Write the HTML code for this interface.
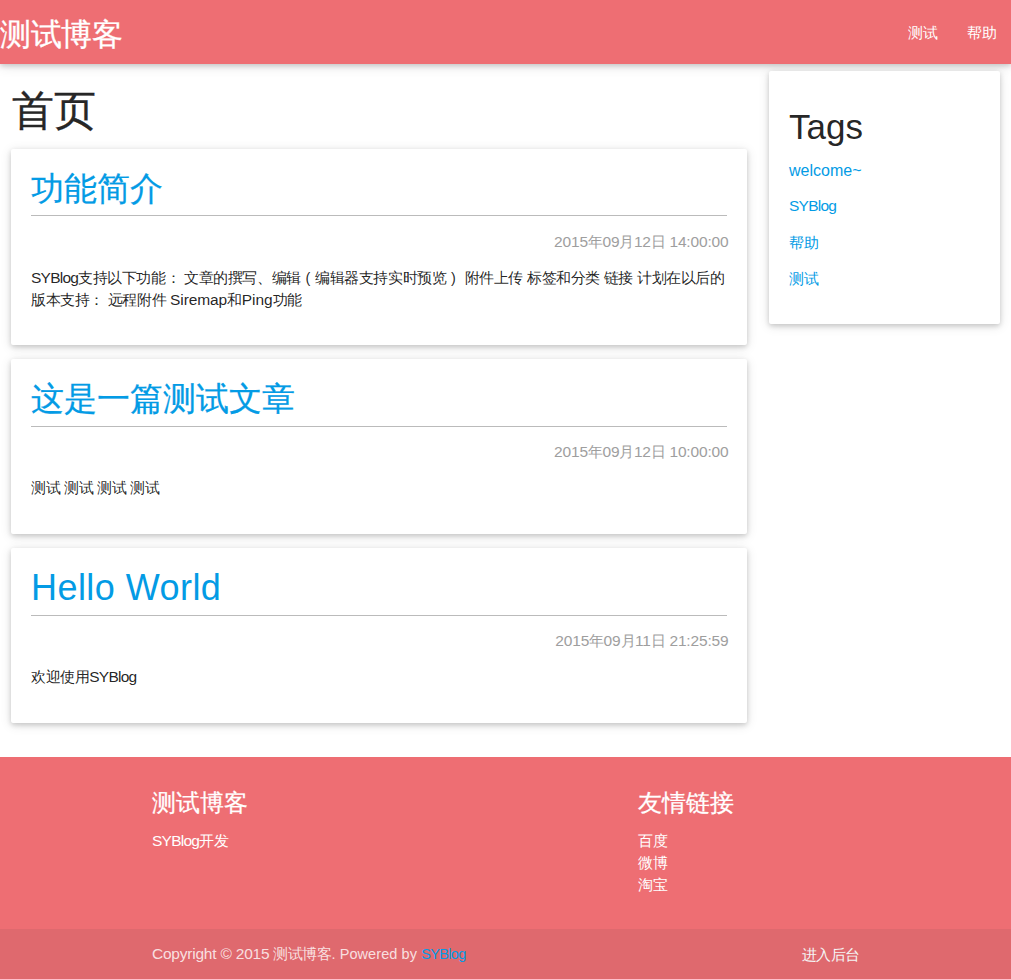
<!DOCTYPE html>
<html lang="zh">
<head>
<meta charset="utf-8">
<title>测试博客</title>
<style>
*{box-sizing:border-box}
html,body{margin:0;padding:0}
body{width:1011px;height:979px;overflow:hidden;position:relative;background:#fff;font-family:"Liberation Sans",sans-serif;font-size:14.5px;line-height:1.5;color:rgba(0,0,0,0.87)}
a{text-decoration:none;color:#039be5}
.c{letter-spacing:-0.5px}
nav{position:absolute;left:0;top:0;width:1011px;height:64px;background:#ee6e73;box-shadow:0 2px 5px 0 rgba(0,0,0,0.16),0 2px 12px 0 rgba(0,0,0,0.12)}
.brand{position:absolute;left:0;top:3px;-webkit-text-stroke:0.3px #fff;line-height:64px;font-size:31px;letter-spacing:-0.35px;color:#fff;white-space:nowrap}
.navr{position:absolute;right:0;top:1px;line-height:64px;font-size:14.5px}
.navr a{color:#fff;float:left;padding:0 15px;letter-spacing:-0.5px}
h3.page{position:absolute;left:12px;top:88px;margin:0;-webkit-text-stroke:0.35px #212121;font-size:42.3px;line-height:46.5px;font-weight:normal;letter-spacing:0.3px}
.card{position:absolute;background:#fff;border-radius:2px;box-shadow:0 2px 5px 0 rgba(0,0,0,0.16),0 2px 12px 0 rgba(0,0,0,0.12)}
.post{left:11px;width:736px}
.title{position:absolute;left:20px;top:22px;-webkit-text-stroke:0.25px #039be5;font-size:33.06px;line-height:36.4px;color:#039be5;white-space:nowrap}
.hr{position:absolute;left:20px;right:20px;height:1px;background:#bbb}
.date{position:absolute;right:18.5px;top:82px;font-size:15.5px;line-height:21.75px;color:#9e9e9e;white-space:nowrap;letter-spacing:-0.16px}
.date .c{letter-spacing:-0.5px;font-size:14.5px}
.body{position:absolute;left:20px;top:119px;font-size:14.5px;line-height:21.75px;color:rgba(0,0,0,0.87);white-space:nowrap;letter-spacing:-0.44px;word-spacing:0.44px}
.body .pp{display:inline-block;width:14.5px;text-align:center;letter-spacing:0}
.body .l{letter-spacing:0;word-spacing:0;line-height:0}
.tags{left:769px;top:71px;width:231px;height:253px}
.tags h3{position:absolute;left:20px;top:36px;margin:0;font-size:35px;font-weight:normal;line-height:40px;color:rgba(0,0,0,0.87)}
.tags a{position:absolute;left:20px;font-size:14.5px;line-height:21.75px;white-space:nowrap}
footer{position:absolute;left:0;top:757px;width:1011px;height:222px;background:#ee6e73;color:#fff}
footer h5{position:absolute;margin:0;-webkit-text-stroke:0.25px #fff;top:33px;font-size:23.78px;line-height:26px;font-weight:normal;white-space:nowrap}
footer .fl{position:absolute;font-size:14.5px;line-height:22px;color:#fff;white-space:nowrap}
.copy{position:absolute;left:0;bottom:0;width:1011px;height:50px;line-height:50px;background:rgba(51,51,51,0.08);color:rgba(255,255,255,0.8);font-size:14.5px}
.copy .l{position:absolute;left:152px;top:0;white-space:nowrap}
.copy .r{position:absolute;right:151.5px;top:1px;white-space:nowrap;color:#f5f5f5;letter-spacing:-0.5px}
</style>
</head>
<body>
<nav>
  <a class="brand">测试博客</a>
  <div class="navr"><a>测试</a><a>帮助</a></div>
</nav>

<h3 class="page">首页</h3>

<div class="card post" style="top:149px;height:196px">
  <a class="title">功能简介</a>
  <div class="hr" style="top:66px"></div>
  <div class="date">2015<span class="c">年</span>09<span class="c">月</span>12<span class="c">日</span> 14:00:00</div>
  <div class="body"><span class="l" style="font-size:15.5px;letter-spacing:-0.75px">SYBlog</span>支持以下功能： 文章的撰写、编辑<span class="pp">(</span>编辑器支持实时预览<span class="pp">)</span> 附件上传 标签和分类 链接 计划在以后的<br>版本支持： 远程附件 <span class="l" style="font-size:15.5px;letter-spacing:-0.1px">Siremap</span>和<span class="l" style="font-size:15.5px;letter-spacing:-0.05px">Ping</span>功能</div>
</div>

<div class="card post" style="top:359px;height:175px">
  <a class="title">这是一篇测试文章</a>
  <div class="hr" style="top:67px"></div>
  <div class="date">2015<span class="c">年</span>09<span class="c">月</span>12<span class="c">日</span> 10:00:00</div>
  <div class="body">测试 测试 测试 测试</div>
</div>

<div class="card post" style="top:548px;height:175px">
  <a class="title" style="font-size:36px;letter-spacing:0.45px;-webkit-text-stroke:0">Hello World</a>
  <div class="hr" style="top:67px"></div>
  <div class="date">2015<span class="c">年</span>09<span class="c">月</span>11<span class="c">日</span> 21:25:59</div>
  <div class="body">欢迎使用<span class="l" style="font-size:15.5px;letter-spacing:-0.75px">SYBlog</span></div>
</div>

<div class="card tags">
  <h3>Tags</h3>
  <a style="top:89px;font-size:16px">welcome~</a>
  <a style="top:124px;font-size:15.5px;letter-spacing:-0.75px">SYBlog</a>
  <a class="c" style="top:162px">帮助</a>
  <a class="c" style="top:198px">测试</a>
</div>

<footer>
  <h5 style="left:152px">测试博客</h5>
  <div class="fl" style="left:152px;top:73px"><span style="font-size:15.5px;letter-spacing:-0.75px;line-height:0">SYBlog</span><span class="c">开发</span></div>
  <h5 style="left:638px">友情链接</h5>
  <div class="fl c" style="left:638px;top:73px">百度</div>
  <div class="fl c" style="left:638px;top:95px">微博</div>
  <div class="fl c" style="left:638px;top:117px">淘宝</div>
  <div class="copy">
    <div class="l"><span style="font-size:15.5px;letter-spacing:-0.22px;line-height:0">Copyright © 2015 </span><span class="c">测试博客</span><span style="letter-spacing:0.08px">. Powered by </span><a style="color:#039be5;letter-spacing:-0.65px">SYBlog</a></div>
    <a class="r">进入后台</a>
  </div>
</footer>
</body>
</html>
